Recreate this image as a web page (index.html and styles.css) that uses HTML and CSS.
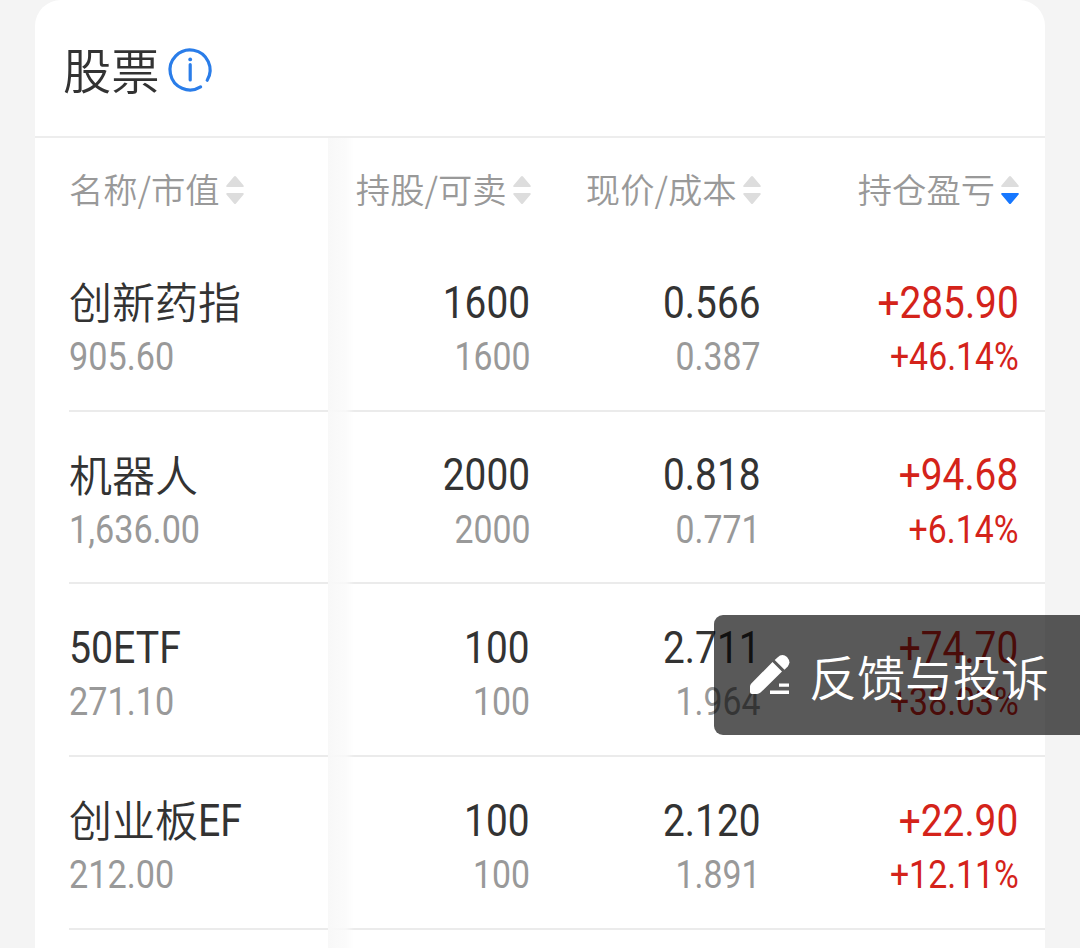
FILE: index.html
```html
<!DOCTYPE html>
<html lang="zh-CN">
<head>
  <meta charset="utf-8">
  <title>股票</title>
  <link rel="stylesheet" href="styles.css">
</head>

<body>
  <!-- sort arrows shared by the table head -->
  <svg class="defs" width="0" height="0">
    <symbol id="up" viewBox="0 0 20 30">
      <path d="M9 1.600q1-1.200 2 0l7.600 8.800q.8 1.600-.8 1.600H2.200q-1.600 0-.8-1.600z"/>
    </symbol>
    <symbol id="down" viewBox="0 0 20 30">
      <path d="M9 28.400q1 1.200 2 0l7.600-8.800q.8-1.600-.8-1.600H2.200q-1.600 0-.8 1.600z"/>
    </symbol>
  </svg>

  <div class="card">
    <div class="card-title">
      <h1>股票</h1>
      <svg class="info" width="44" height="44" viewBox="0 0 44 44" fill="none" stroke="#2a7de9" stroke-width="3.200" stroke-linecap="round">
        <path d="M32.600 38.900A20 20 0 1 1 39.200 32.200"/>
        <path d="M22.200 16.700v15.200"/>
        <circle cx="22.200" cy="11.400" r="1.900" fill="#2a7de9" stroke="none"/>
      </svg>
    </div>

    <div class="table">
      <div class="row head">
        <div class="cell name">名称/市值<svg class="sort"><use href="#up"/><use href="#down"/></svg></div>
        <div class="cell">持股/可卖<svg class="sort"><use href="#up"/><use href="#down"/></svg></div>
        <div class="cell">现价/成本<svg class="sort"><use href="#up"/><use href="#down"/></svg></div>
        <div class="cell">持仓盈亏<svg class="sort"><use href="#up"/><use class="active" href="#down"/></svg></div>
      </div>

      <div class="row">
        <div class="cell name"><p>创新药指</p><p class="sub"><span>905.60</span></p></div>
        <div class="cell"><p><span>1600</span></p><p class="sub"><span>1600</span></p></div>
        <div class="cell"><p><span>0.566</span></p><p class="sub"><span>0.387</span></p></div>
        <div class="cell profit"><p><span>+285.90</span></p><p class="sub"><span>+46.14%</span></p></div>
      </div>

      <div class="row">
        <div class="cell name"><p>机器人</p><p class="sub"><span>1,636.00</span></p></div>
        <div class="cell"><p><span>2000</span></p><p class="sub"><span>2000</span></p></div>
        <div class="cell"><p><span>0.818</span></p><p class="sub"><span>0.771</span></p></div>
        <div class="cell profit"><p><span>+94.68</span></p><p class="sub"><span>+6.14%</span></p></div>
      </div>

      <div class="row">
        <div class="cell name"><p><span>50ETF</span></p><p class="sub"><span>271.10</span></p></div>
        <div class="cell"><p><span>100</span></p><p class="sub"><span>100</span></p></div>
        <div class="cell"><p><span>2.711</span></p><p class="sub"><span>1.964</span></p></div>
        <div class="cell profit"><p><span>+74.70</span></p><p class="sub"><span>+38.03%</span></p></div>
      </div>

      <div class="row">
        <div class="cell name"><p>创业板<span>EF</span></p><p class="sub"><span>212.00</span></p></div>
        <div class="cell"><p><span>100</span></p><p class="sub"><span>100</span></p></div>
        <div class="cell"><p><span>2.120</span></p><p class="sub"><span>1.891</span></p></div>
        <div class="cell profit"><p><span>+22.90</span></p><p class="sub"><span>+12.11%</span></p></div>
      </div>
    </div>
  </div>

  <div class="feedback">
    <svg width="40" height="40" viewBox="0 0 40 40" fill="#fff">
      <path d="M22.500 7L32 16.500 10.500 37.600Q9 39 7 39H2Q0 39 0 37V31.500Q0 29.800 1.300 28.500Z"/>
      <path d="M24.700 5L27.500 2.400Q32.300-2 37 2 41.400 7 37.800 11.500L34.500 14.800Z"/>
      <path d="M29 28.600h10v3.200H29zM20 35.600h19v3.400H20z"/>
    </svg>
    <div>反馈与投诉</div>
  </div>
</body>

</html>
```
FILE: styles.css
```css
body {
  margin: 0;
  height: 948px;
  overflow: hidden;
  background-color: #f4f4f4;
  font-family: "Noto Sans CJK SC", sans-serif;
  font-weight: 350;
  color: #333;
}

.defs {
  position: absolute;
}

.card {
  width: 1010px;
  height: 948px;
  margin: 0 35px;
  background-color: #fff;
  border-radius: 26px 26px 0 0;
  overflow: hidden;
}

.card-title {
  display: flex;
  align-items: center;
  box-sizing: border-box;
  height: 138px;
  padding: 0 0 2px 28px;
  border-bottom: 2px solid #ededed;
}

.card-title h1 {
  margin: 1px 8px 0 0;
  font-size: 48.3px;
  line-height: 60px;
  font-weight: inherit;
}

.info {
  margin: 5px 0 0 0.5px;
  overflow: visible;
}

.table {
  position: relative;
  height: 810px;
}

/* soft edge beside the frozen first column */
.table::after {
  content: "";
  position: absolute;
  top: 0;
  bottom: 0;
  left: 293px;
  width: 26px;
  background-image: linear-gradient(to right, #f8f8f8, rgba(250, 250, 250, 0.8) 18px, rgba(255, 255, 255, 0));
}

.row {
  display: grid;
  grid-template-columns: 293px 202px 230px 285px;
  height: 172.7px;
}

.cell {
  box-sizing: border-box;
  padding-top: 34px;
  border-bottom: 2px solid #ebebeb;
  text-align: right;
}

.cell:last-child {
  padding-right: 26.5px;
}

.cell.name {
  margin-left: 34px;
  text-align: left;
}

.cell p {
  margin: 0;
  height: 54px;
  line-height: 54px;
  font-size: 43px;
  white-space: nowrap;
}

.cell span {
  display: inline-block;
  position: relative;
  top: -1.5px;
  font-family: Roboto, sans-serif;
  font-size: 43.6px;
  font-weight: 400;
  transform: scaleX(0.89);
  transform-origin: right;
}

.cell.name span {
  transform: scaleX(0.9);
  transform-origin: left;
}

.cell .sub {
  color: #999;
}

.cell .sub span {
  top: -3px;
  font-size: 38px;
}

.profit p,
.profit .sub {
  color: #d4231a;
}

.head {
  height: 101px;
}

.head .cell {
  display: flex;
  align-items: center;
  justify-content: flex-end;
  padding: 0 0 1px;
  border-bottom: none;
  font-size: 34.3px;
  color: #999;
}

.head .cell:nth-child(n+2) {
  margin-right: -1.5px;
}

.head .cell:last-child {
  margin-right: 0;
  padding-right: 25px;
}

.head .name {
  justify-content: flex-start;
}

.sort {
  width: 20px;
  height: 30px;
  margin: 4px 0 0 5px;
  fill: #ddd;
}

.sort .active {
  fill: #1677ff;
}

.feedback {
  position: absolute;
  top: 615px;
  right: 0;
  display: flex;
  align-items: center;
  box-sizing: border-box;
  width: 366px;
  height: 120px;
  padding-left: 36px;
  border-radius: 9px 0 0 9px;
  background-color: rgba(0, 0, 0, 0.65);
  color: #fff;
  font-size: 48px;
  line-height: 60px;
  white-space: nowrap;
}

.feedback div {
  margin: 0 0 0 19px;
}
```
